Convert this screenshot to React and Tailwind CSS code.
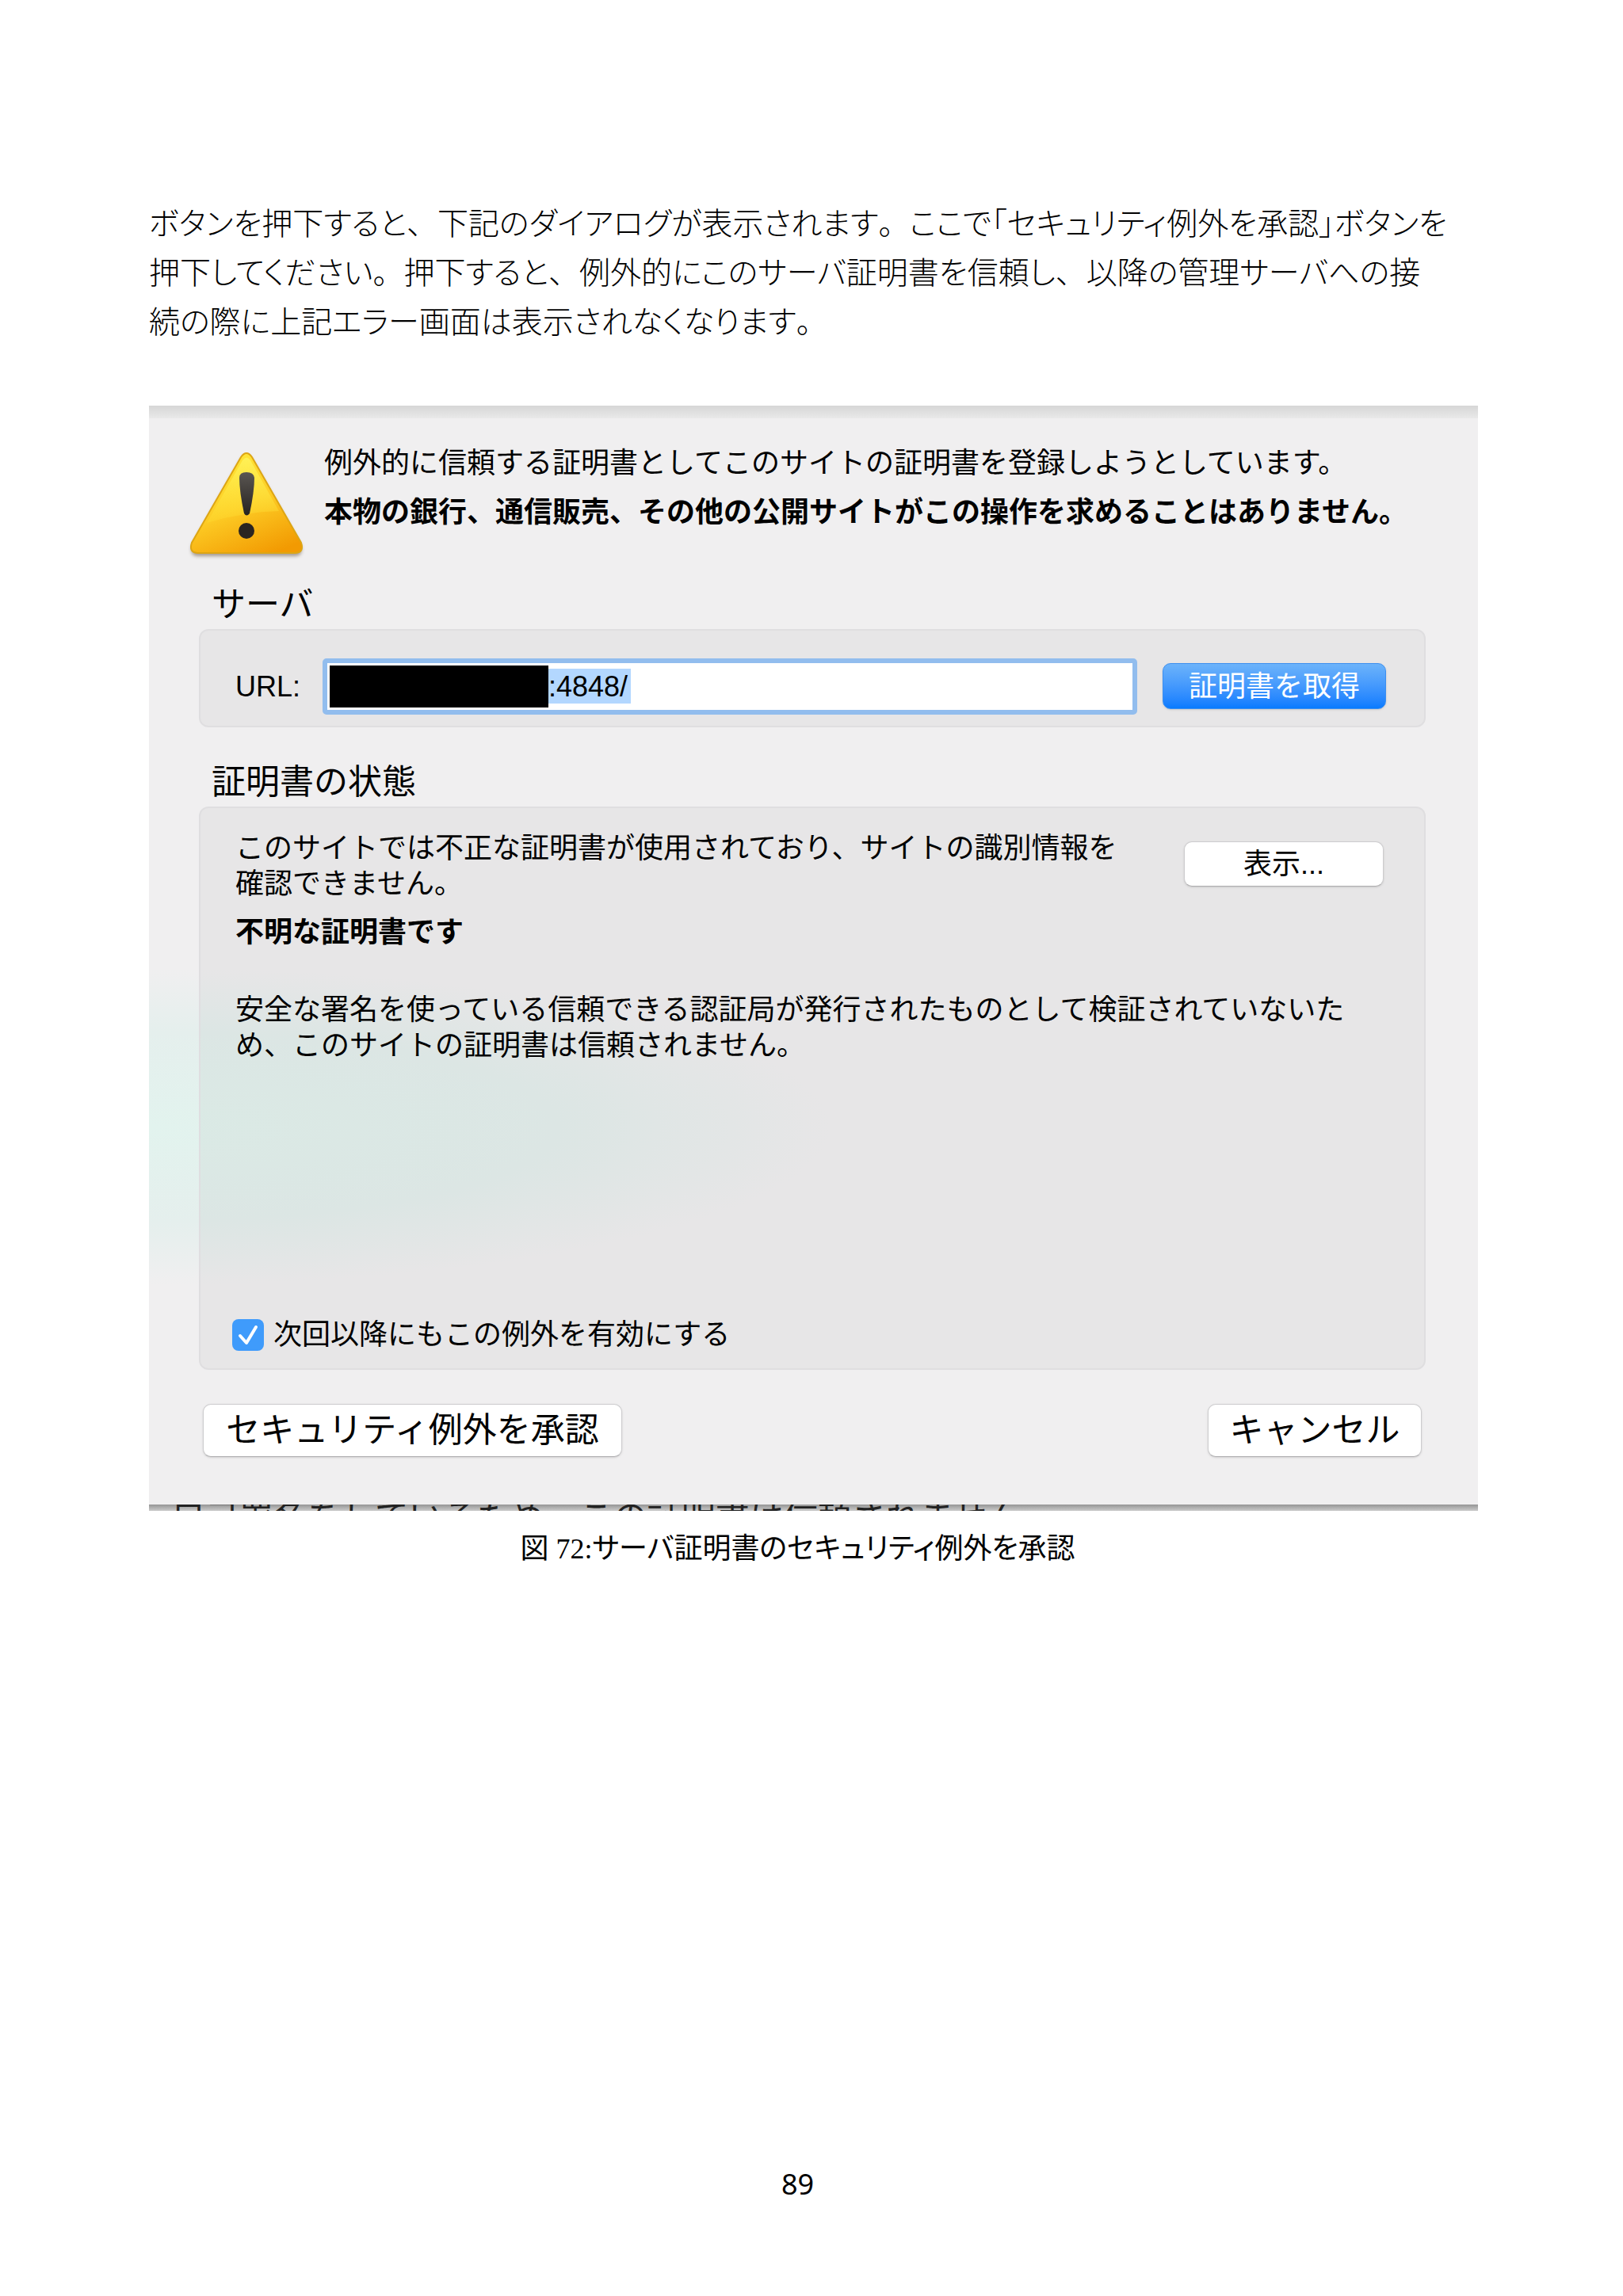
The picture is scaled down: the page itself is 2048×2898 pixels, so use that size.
const ui = "font-['Liberation_Sans','Noto_Sans_CJK_JP',sans-serif]";
const doc = "font-['Liberation_Serif','Noto_Sans_CJK_JP',serif]";

const intro = [
  "ボタンを押下すると、下記のダイアログが表示されます。ここで「セキュリティ例外を承認」ボタンを",
  "押下してください。押下すると、例外的にこのサーバ証明書を信頼し、以降の管理サーバへの接",
  "続の際に上記エラー画面は表示されなくなります。",
];

function WarningIcon() {
  return (
    <svg viewBox="0 0 150 146" className="h-[146px] w-[150px] shrink-0" aria-hidden="true">
      <defs>
        <linearGradient id="face" x1="0.3" y1="0" x2="0.75" y2="1">
          <stop offset="0" stopColor="#ffe83a" />
          <stop offset="0.5" stopColor="#fdcc25" />
          <stop offset="1" stopColor="#f29a02" />
        </linearGradient>
        <linearGradient id="gloss" x1="0" y1="0" x2="0" y2="1">
          <stop offset="0" stopColor="#fff25a" stopOpacity="0.9" />
          <stop offset="1" stopColor="#ffe235" stopOpacity="0.25" />
        </linearGradient>
        <linearGradient id="mark" x1="0" y1="0" x2="0" y2="1">
          <stop offset="0" stopColor="#5a5652" />
          <stop offset="1" stopColor="#262220" />
        </linearGradient>
        <filter id="soft" x="-10%" y="-10%" width="120%" height="130%">
          <feGaussianBlur stdDeviation="2" />
        </filter>
      </defs>
      <path d="M67 12 Q74 2 81 12 L143 121 Q146 133 136 134 L12 134 Q2 133 5 121 Z" fill="#5b4632" opacity="0.5" filter="url(#soft)" />
      <path d="M67 9 Q74 -1 81 9 L143 117 Q147 129 136 130 L12 130 Q1 129 5 117 Z" fill="url(#face)" stroke="#dda514" strokeWidth="2" />
      <path d="M69 13 Q74 6 79 13 L115 77 Q70 78 24 92 Z" fill="url(#gloss)" />
      <path d="M65 35 Q65 28 74 28 Q83 28 84 35 Q84 52 78 80 Q74 85 71 80 Q65 52 65 35 Z" fill="url(#mark)" />
      <circle cx="74" cy="102" r="10" fill="#2a2421" />
    </svg>
  );
}

function Button({ children, className = "" }) {
  return (
    <button
      type="button"
      className={`shrink-0 rounded-[10px] border border-[#cdccce] border-b-[#aeadaf] bg-white text-center whitespace-nowrap shadow-sm ${className}`}
    >
      {children}
    </button>
  );
}

// proportional kana, full-width 、 and 。
function BodyLine({ text }) {
  return (
    <span className="block">
      {text.split(/([、。])/).map((part, i) =>
        i % 2 ? (
          <span key={i} className="[font-feature-settings:normal]">{part}</span>
        ) : (
          part
        )
      )}
    </span>
  );
}

function CertificateDialog() {
  return (
    <section
      className={`${ui} overflow-hidden bg-[#f0eff0] bg-[radial-gradient(ellipse_860px_200px_at_0px_910px,#e2f3ee_0%,#e5efed_60%,#f0eff000_100%)] text-4xl leading-[45px] text-black`}
    >
      <div className="h-4 bg-linear-to-b from-[#d6d6d6] to-[#e9e9e9]" />

      <div className="pt-6 pr-[66px] pl-[63px]">
        <div className="-ml-3.5 flex items-start gap-[22px]">
          <div className="pt-4">
            <WarningIcon />
          </div>
          <div className="pt-0.5 whitespace-nowrap">
            <p className="leading-[62px]">例外的に信頼する証明書としてこのサイトの証明書を登録しようとしています。</p>
            <p className="leading-[62px] font-bold">本物の銀行、通信販売、その他の公開サイトがこの操作を求めることはありません。</p>
          </div>
        </div>

        <h2 className="mt-[18px] pl-4 text-[43px] leading-[62px]">サーバ</h2>
        <div className="flex h-[124px] items-center rounded-xl border-2 border-[#dfdee0] bg-black/[0.035] pt-5 pr-12 pl-11">
          <label htmlFor="url" className="w-[110px] shrink-0">URL:</label>
          <div className="flex h-[71px] flex-1 items-center rounded-[5px] border-[6px] border-[#92bdee] bg-white pl-[3px]">
            <span className="h-[53px] w-[276px] bg-black" />
            <input id="url" type="text" defaultValue=":4848/" className="h-11 w-[104px] bg-[#b3d7ff] outline-none" />
          </div>
          <button
            type="button"
            className="ml-8 h-[58px] w-[282px] shrink-0 rounded-[10px] border border-[#3c8ff0] bg-linear-to-b from-[#6cb3fa] to-[#067bff] text-white shadow-sm"
          >
            証明書を取得
          </button>
        </div>

        <h2 className="mt-[38px] pl-4 text-[43px] leading-[62px]">証明書の状態</h2>
        <div className="flex h-[711px] flex-col rounded-xl border-2 border-[#dfdee0] bg-black/[0.035] pt-7 pr-[51px] pb-5 pl-11">
          <div className="flex items-start justify-between">
            <p>
              このサイトでは不正な証明書が使用されており、サイトの識別情報を
              <br />
              確認できません。
            </p>
            <Button className="mt-3.5 h-[57px] w-[252px]">表示...</Button>
          </div>
          <p className="mt-4 font-bold">不明な証明書です</p>
          <p className="mt-[53px] whitespace-nowrap">
            安全な署名を使っている信頼できる認証局が発行されたものとして検証されていないた
            <br />
            め、このサイトの証明書は信頼されません。
          </p>
          <label className="mt-auto flex items-center gap-3">
            <span className="relative -ml-1 block size-10">
              <input type="checkbox" defaultChecked className="size-10 appearance-none rounded-lg bg-[#3f9bfb]" />
              <svg viewBox="0 0 40 40" className="pointer-events-none absolute inset-0" aria-hidden="true">
                <path d="M10 21 L18 30 L30 10" fill="none" stroke="#fff" strokeWidth="4" strokeLinecap="round" strokeLinejoin="round" />
              </svg>
            </span>
            次回以降にもこの例外を有効にする
          </label>
        </div>

        <div className="mt-[43px] flex justify-between px-[5px] text-[43px]">
          <Button className="h-[67px] w-[529px]">セキュリティ例外を承認</Button>
          <Button className="h-[67px] w-[270px]">キャンセル</Button>
        </div>
      </div>

      {/* page behind the sheet, cut off by its lower edge */}
      <div className="mt-[60px] h-2 overflow-hidden bg-linear-to-b from-[#959595] to-[#cbcbcb] pl-7 text-[43px] leading-8 whitespace-nowrap text-[#222]">
        自己署名をしているため、この証明書は信頼されません。
      </div>
    </section>
  );
}

export default function App() {
  return (
    <main className={`${doc} min-h-screen bg-white pt-[252px] pr-[183px] pb-[116px] pl-[188px] text-black`} lang="ja">
      <p className="text-[39px] leading-[62px] font-light whitespace-nowrap [font-feature-settings:'palt']">
        {intro.map((line) => (
          <BodyLine key={line} text={line} />
        ))}
      </p>

      <figure className="mt-[74px]">
        <CertificateDialog />
        <figcaption className="mt-5 pr-10 text-center text-4xl leading-[56px] [font-feature-settings:'palt']">
          図 72:サーバ証明書のセキュリティ例外を承認
        </figcaption>
      </figure>

      <footer className="mt-[746px] pr-10 text-center font-['Noto_Sans',sans-serif] text-4xl leading-[56px]">89</footer>
    </main>
  );
}
